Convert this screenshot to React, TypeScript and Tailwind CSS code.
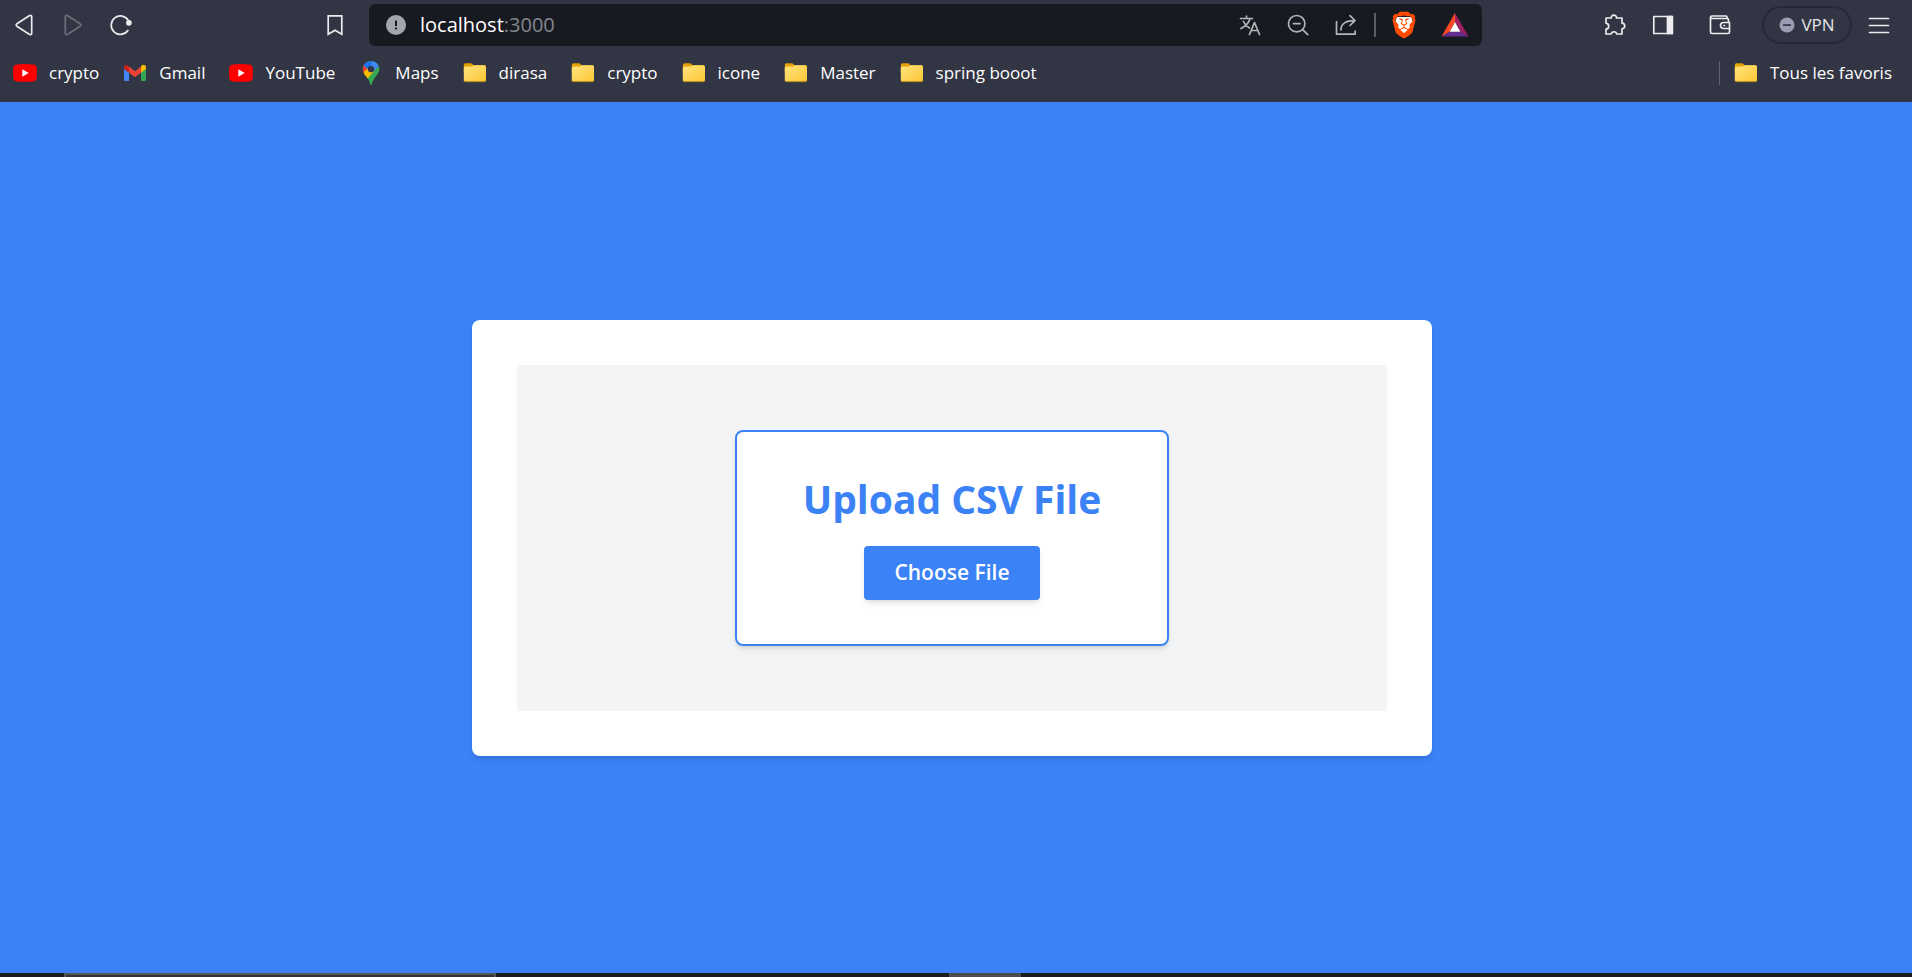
import type { ReactNode } from 'react';
import { SiBrave } from 'react-icons/si';

function YouTubeIcon() {
  return (
    <svg width="24" height="24" viewBox="0 0 24 24" aria-hidden="true">
      <path d="M4 3.6Q12 2.6 20 3.6Q23.4 3.9 23.7 7Q24.2 12 23.7 17Q23.4 20.1 20 20.4Q12 21.2 4 20.4Q.6 20.1 .3 17Q-.2 12 .3 7Q.6 3.9 4 3.6Z" fill="#f00" />
      <path d="M9.3 8.2v7.6l6.4-3.8z" fill="#fff" />
    </svg>
  );
}

function GmailIcon() {
  return (
    <svg width="24" height="24" viewBox="0 0 24 24" aria-hidden="true">
      <path d="M1 7.6V18.5Q1 20 2.5 20H6V11.5z" fill="#4285f4" />
      <path d="M18 11.5V20h3.5Q23 20 23 18.5V7.6z" fill="#34a853" />
      <path d="M18 5.6v6.2l5-3.7V6.5c0-2.6-2.6-3.4-4.2-2.2z" fill="#fbbc04" />
      <path d="M6 11.8V5.6l6 4.6 6-4.6v6.2l-6 4.5z" fill="#ea4335" />
      <path d="M1 6.5v1.6l5 3.7V5.6L5.2 4.7C3.6 3.5 1 3.900 1 6.5z" fill="#c5221f" />
    </svg>
  );
}

function MapsIcon() {
  return (
    <svg width="24" height="24" viewBox="0 0 24 24" aria-hidden="true">
      <clipPath id="pin">
        <path d="M12 0C7.300 0 3.800 3.600 3.800 8.200c0 2.700 1.200 4.500 3.200 7 2 2.500 3.400 4.400 4 7.200.3 1.200.5 1.600 1 1.600s.7-.4 1-1.600c.6-2.800 2-4.700 4-7.200s3.200-4.300 3.200-7C20.200 3.600 16.700 0 12 0z" />
      </clipPath>
      <g clipPath="url(#pin)">
        <path d="M0 0h24v24H0z" fill="#34a853" />
        <path d="M3 2l9 6.500-6.500 7L3 12z" fill="#ea4335" />
        <path d="M3.500 13l5.500-6.500 5.600 4.200L7.300 19z" fill="#fbbc04" />
        <path d="M4 0h9l-.5 5L9.200 8.300 4.600 4.400z" fill="#1a73e8" />
        <path d="M13 0h8v8l-6.500 2L12 5z" fill="#4285f4" />
        <path d="M15 9l6-4v6z" fill="#34a853" />
      </g>
      <circle cx="12" cy="8.200" r="3.100" fill="#323543" />
    </svg>
  );
}

function FolderIcon() {
  return (
    <svg width="24" height="24" viewBox="0 0 24 24" aria-hidden="true">
      <defs>
        <linearGradient id="folder" x1="0" y1="0" x2="1" y2="1">
          <stop offset="0.200" stopColor="#ffdf70" />
          <stop offset="1" stopColor="#fcc636" />
        </linearGradient>
      </defs>
      <path d="M.8 4Q.8 2.300 2.500 2.300h5.300q1 0 1.600.7l1 1.200H21Q23 4.200 23 6v5H.8z" fill="#e3a008" />
      <path d="M.8 7.200Q.8 5.600 2.400 5.600H8.600L10.800 4.200H21.400Q23 4.200 23 5.800V19Q23 20.600 21.400 20.600H2.400Q.8 20.600 .8 19z" fill="url(#folder)" />
      <path d="M.9 19.400Q1.300 20.600 2.400 20.600H21.400Q22.600 20.600 22.900 19.400" fill="none" stroke="#c9921c" strokeWidth="1" />
    </svg>
  );
}

function ToolButton({ label, children }: { label: string; children: ReactNode }) {
  return (
    <button type="button" aria-label={label} className="flex size-6 shrink-0 items-center justify-center">
      <svg width="24" height="24" viewBox="0 0 24 24" fill="none" stroke="currentColor" strokeWidth="1.700" strokeLinejoin="round" strokeLinecap="round" aria-hidden="true">
        {children}
      </svg>
    </button>
  );
}

const bookmarks = [
  { name: 'crypto', icon: <YouTubeIcon /> },
  { name: 'Gmail', icon: <GmailIcon /> },
  { name: 'YouTube', icon: <YouTubeIcon /> },
  { name: 'Maps', icon: <MapsIcon /> },
  { name: 'dirasa', icon: <FolderIcon /> },
  { name: 'crypto', icon: <FolderIcon /> },
  { name: 'icone', icon: <FolderIcon /> },
  { name: 'Master', icon: <FolderIcon /> },
  { name: 'spring booot', icon: <FolderIcon /> },
];

function Toolbar() {
  return (
    <div className="flex h-[50px] items-center text-[#ececee]">
      <div className="flex w-[369px] shrink-0 items-center gap-6 pr-[22px] pl-3">
        <ToolButton label="Back">
          <path d="M17.200 2.700 4.900 10.800q-1.500 1.200 0 2.400L17.200 21.300q2.500 1 2.500-1.300V4q0-2.300-2.500-1.300z" />
        </ToolButton>
        <span className="flex text-[#6c6e79]">
          <ToolButton label="Forward">
            <path d="M7.800 2.700 20.100 10.800q1.500 1.200 0 2.400L7.800 21.300q-2.500 1-2.500-1.300V4q0-2.300 2.500-1.300z" />
          </ToolButton>
        </span>
        <ToolButton label="Reload">
          <path d="M19.900 17.500A9.200 9.200 0 1 1 20.400 7.600" />
          <circle cx="20.900" cy="9.800" r="2" fill="currentColor" />
        </ToolButton>
        <span className="ml-auto flex">
          <ToolButton label="Bookmark this page">
            <path d="M5.200 2.900h13.600v18.300L12 17.200l-6.800 4z" strokeLinejoin="miter" />
          </ToolButton>
        </span>
      </div>

      <div className="flex h-[42px] min-w-0 flex-1 items-center rounded-md bg-[#181a21] pr-[13px] pl-[15px]">
        <button type="button" aria-label="Site information" className="flex size-6 shrink-0">
          <svg width="24" height="24" viewBox="0 0 24 24" aria-hidden="true">
            <circle cx="12" cy="12" r="10" fill="#a3a5af" />
            <path d="M11 7.500h2v5.500h-2zM11 14.500h2v2h-2z" fill="#181a21" />
          </svg>
        </button>
        <a href="#" className="ml-3 flex-1 text-xl leading-6 text-white">
          localhost<span className="text-[#84868d]">:3000</span>
        </a>
        <div className="flex items-center gap-6 text-[#b4b5b9]">
          <ToolButton label="Translate">
            <path d="M2.500 5.500h12M8.500 3v2.500M12 5.500C11 10 7 13.500 3 15.500M5.500 8.500C7 12 9 13.500 11.500 15M11.500 21.500 16.500 9.500l5 12M13.300 17.500h6.400" />
          </ToolButton>
          <ToolButton label="Zoom out">
            <circle cx="10.700" cy="10.700" r="8.200" />
            <path d="M7.500 10.700h6.400M16.700 16.700l5 5" />
          </ToolButton>
          <ToolButton label="Share">
            <path d="M2.500 8.500v12.700h18.700v-3M7 16.800C7 10.500 12 7.600 20.500 7.600M16 2.700l5 4.900-5 4.900" />
          </ToolButton>
        </div>
        <span className="ml-4 h-6 w-0.5 bg-[#5c5e66]" />
        <button type="button" aria-label="Shields" className="ml-[14px] grid size-7 shrink-0 place-items-center">
          <svg width="28" height="28" viewBox="0 0 28 28" aria-hidden="true">
            <path d="M7 6h14l2 5-4 10-5 3-5-3-4-10z" fill="#fff" />
            <SiBrave x="0.500" y="0.500" size={27} color="#ff4b00" />
          </svg>
        </button>
        <button type="button" aria-label="Rewards" className="ml-[23px] grid size-7 shrink-0 place-items-center">
          <svg width="28" height="26" viewBox="0 0 28 26" aria-hidden="true">
            <path d="M14 1 .500 24.500 9 19.500 14 10z" fill="#ff4724" />
            <path d="M14 1 27.500 24.500 19 19.500 14 10z" fill="#9e1f63" />
            <path d="M.500 24.500h27L19 19.500H9z" fill="#662d91" />
            <path d="M14 10 8.700 19.800h10.600z" fill="#fff" />
          </svg>
        </button>
      </div>

      <div className="flex w-[430px] shrink-0 items-center justify-end pr-[21px]">
        <ToolButton label="Extensions">
          <path d="M3 5h5.200c-.3-3.800 5.600-3.800 5.300 0H19v5.200c3.600.3 3.600 5.300 0 5.600V21h-5.300c-.4-3-5-3-5.400 0H3v-4.800c3.600-.4 3.600-5.600 0-6z" />
        </ToolButton>
        <span className="ml-6 flex">
          <ToolButton label="Side panel">
            <path d="M2.800 3.500h18.500v17H2.800z" />
            <path d="M16.500 3.500h4.800v17h-4.800z" fill="currentColor" />
          </ToolButton>
        </span>
        <span className="ml-[33px] flex">
          <ToolButton label="Wallet">
            <path d="M20.500 9V7q0-1.500-1.500-1.500H4Q2.500 5.500 2.500 4M19 5.500V4q0-1-1-1H4Q2.500 3 2.500 4.500V19q0 1.500 1.500 1.500h16q1.500 0 1.500-1.500V9.500H15q-2.500.5-2.500 3t2.500 3h6.500M16 12.500h.5" />
          </ToolButton>
        </span>
        <button type="button" className="ml-[30px] flex h-[38px] w-[90px] shrink-0 items-center justify-center gap-1.5 rounded-full border-2 border-[#272a36] text-[17px] leading-6 text-[#e4e4e8]">
          <svg width="16" height="16" viewBox="0 0 16 16" aria-hidden="true">
            <circle cx="8" cy="8" r="7.500" fill="#9a9cb3" />
            <path d="M4 7.200h8v1.700H4z" fill="#323543" />
          </svg>
          VPN
        </button>
        <span className="ml-[15px] flex">
          <ToolButton label="Menu">
            <path d="M2.500 5.500h19M2.500 12.500h19M2.500 19.500h19" />
          </ToolButton>
        </span>
      </div>
    </div>
  );
}

function BookmarksBar() {
  return (
    <nav aria-label="Bookmarks" className="flex h-[46px] items-center pr-5 pl-[13px] text-[17px] leading-6 whitespace-nowrap text-white">
      <div className="flex flex-1 gap-6">
        {bookmarks.map((b, i) => (
          <a key={i} href="#" className="flex items-center gap-3">
            {b.icon}
            {b.name}
          </a>
        ))}
      </div>
      <a href="#" className="flex items-center gap-3 border-l border-[#5f616d] pl-[14px]">
        <FolderIcon />
        Tous les favoris
      </a>
    </nav>
  );
}

export default function App() {
  return (
    <div className="flex min-h-screen flex-col bg-[#3b82f6] font-['Open_Sans','Noto_Sans',sans-serif]">
      <header className="bg-[#323543] pb-1.5">
        <Toolbar />
        <BookmarksBar />
      </header>

      <main className="flex flex-1 items-center justify-center pr-2">
        <section className="w-full max-w-[960px] rounded-lg bg-white p-[45px] shadow-md">
          <div className="flex justify-center bg-[#f3f4f6] py-[65px]">
            <div className="flex w-full max-w-[434px] flex-col items-center gap-6 rounded-lg border-2 border-[#3b82f6] bg-white py-11 shadow-md">
              <h1 className="text-[39px] leading-[46px] font-bold text-[#3b82f6]">Upload CSV File</h1>
              <button type="button" className="h-[54px] w-44 rounded bg-[#3b82f6] text-[21px] font-semibold text-white shadow-md">
                Choose File
              </button>
            </div>
          </div>
        </section>
      </main>

      <footer className="flex h-1 bg-[#1c1b1f]">
        <div className="ml-16 h-1 w-[432px] border-2 border-b-0 border-[#555] bg-[#333]" />
        <div className="ml-[453px] h-1 w-[72px] bg-[#4c4c4e]" />
      </footer>
    </div>
  );
}
